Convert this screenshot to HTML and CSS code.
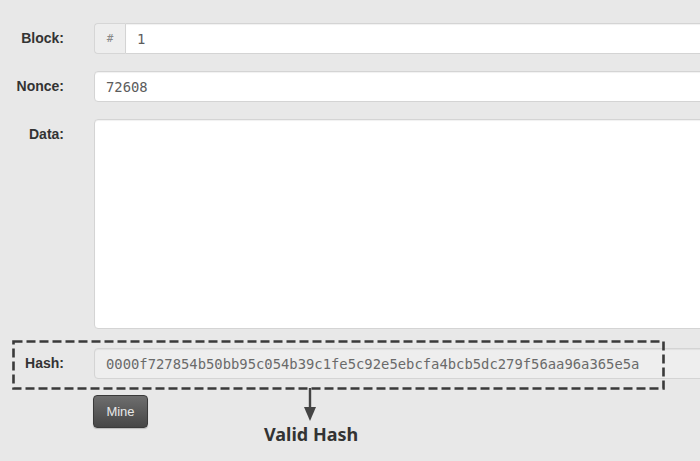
FILE: index.html
```html
<!DOCTYPE html>
<html>
<head>
<meta charset="utf-8">
<link rel="stylesheet" href="styles.css">
</head>
<body>
<div class="page">
  <form class="block-form">
    <div class="row">
      <label class="label">Block:</label>
      <div class="field group">
        <span class="addon">#</span>
        <input class="input" type="text" value="1">
      </div>
    </div>
    <div class="row">
      <label class="label">Nonce:</label>
      <div class="field">
        <input class="input" type="text" value="72608">
      </div>
    </div>
    <div class="row row-data">
      <label class="label">Data:</label>
      <div class="field">
        <textarea class="input textarea"></textarea>
      </div>
    </div>
    <div class="row row-hash">
      <label class="label">Hash:</label>
      <div class="field">
        <input class="input readonly" type="text" value="0000f727854b50bb95c054b39c1fe5c92e5ebcfa4bcb5dc279f56aa96a365e5a" readonly>
      </div>
    </div>
    <div class="row row-btn">
      <span class="label"></span>
      <div class="field">
        <button class="btn" type="button">Mine</button>
      </div>
    </div>
  </form>

  <svg class="highlight" width="654" height="51" viewBox="0 0 654 51">
    <rect x="1.5" y="1.5" width="650" height="47" fill="none" stroke="#3a3a3a" stroke-width="2.6" stroke-dasharray="9 4"/>
  </svg>
  <svg class="arrow" width="14" height="36" viewBox="0 0 14 36">
    <line x1="7" y1="0" x2="7" y2="24" stroke="#444" stroke-width="2.4"/>
    <polygon points="1,19 13,19 7,33" fill="#444"/>
  </svg>
  <div class="callout">Valid Hash</div>
</div>
</body>
</html>
```

FILE: styles.css
```css
html, body {
  margin: 0;
  padding: 0;
}
body {
  width: 700px;
  height: 461px;
  overflow: hidden;
  background: #e7e7e7;
  font-family: "Liberation Sans", Arial, sans-serif;
}
.page {
  position: relative;
  width: 700px;
  height: 461px;
  background: #e8e8e8;
}
.block-form {
  display: flex;
  flex-direction: column;
  padding-top: 23px;
}
.row {
  display: flex;
  align-items: flex-start;
  margin-bottom: 17px;
}
.row-data {
  margin-bottom: 19px;
}
.row-hash {
  margin-bottom: 16px;
}
.label {
  flex: 0 0 64px;
  width: 64px;
  margin-right: 30px;
  text-align: right;
  font-weight: bold;
  font-size: 14px;
  line-height: 30px;
  color: #333;
}
.field {
  flex: 0 0 640px;
  width: 640px;
  display: flex;
}
.group .addon {
  flex: 0 0 31px;
  width: 31px;
  height: 31px;
  box-sizing: border-box;
  border: 1px solid #d6d6d6;
  border-right: none;
  border-radius: 4px 0 0 4px;
  background: #eeeeee;
  color: #888;
  font-family: "DejaVu Sans Mono", monospace;
  font-size: 11px;
  line-height: 29px;
  text-align: center;
}
.input {
  flex: 1;
  height: 31px;
  box-sizing: border-box;
  border: 1px solid #d4d4d4;
  border-radius: 4px;
  background: #fff;
  padding: 0 11px;
  font-family: "DejaVu Sans Mono", monospace;
  font-size: 13.85px;
  color: #5c5c5c;
  outline: none;
  box-shadow: inset 0 1px 1px rgba(0,0,0,0.06);
}
.group .input {
  border-radius: 0 4px 4px 0;
}
.textarea {
  height: 210px;
  resize: none;
}
.readonly {
  background: #eeeeee;
  color: #6a6a6a;
}
.btn {
  width: 55px;
  height: 33px;
  margin-left: -1px;
  border: 1px solid #3a3a3a;
  border-radius: 4px;
  background: linear-gradient(#6e6e6e, #464646);
  color: #e8e8e8;
  font-family: "Liberation Sans", Arial, sans-serif;
  font-size: 13px;
  padding: 0;
  box-shadow: 0 1px 1px rgba(0,0,0,0.2);
}
.highlight {
  position: absolute;
  left: 12px;
  top: 340px;
}
.arrow {
  position: absolute;
  left: 303px;
  top: 388px;
}
.callout {
  position: absolute;
  left: 264px;
  top: 422px;
  font-family: "Noto Sans", "Noto Sans CJK KR", sans-serif;
  font-weight: bold;
  font-size: 18px;
  line-height: 24px;
  color: #333;
}
```
